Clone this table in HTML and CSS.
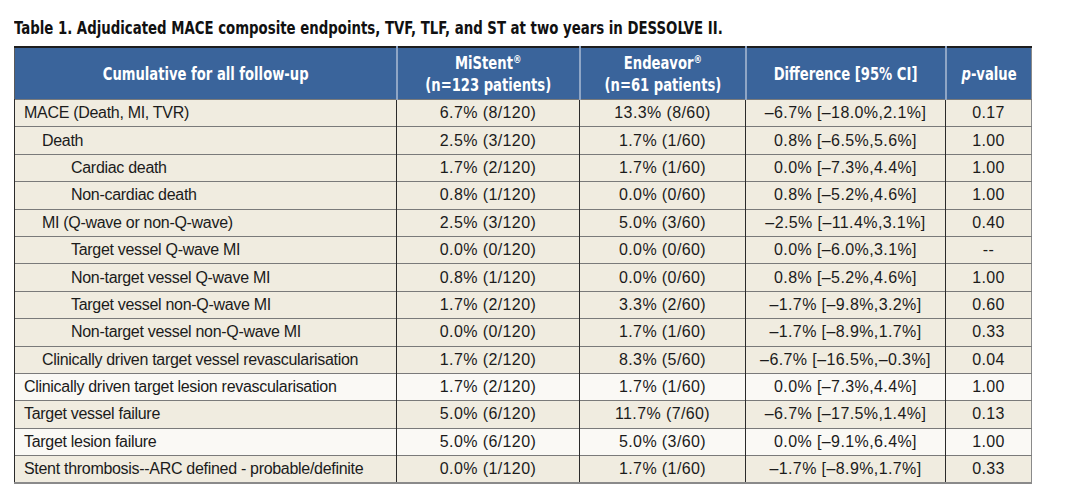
FILE: index.html
```html
<!DOCTYPE html>
<html lang="en">
<head>
<meta charset="utf-8">
<title>Table 1</title>
<link rel="stylesheet" href="styles.css">
</head>
<body>
<div class="page">
  <h1 class="caption"><span class="narrow left">Table 1. Adjudicated MACE composite endpoints, TVF, TLF, and ST at two years in DESSOLVE II.</span></h1>
  <table class="data">
    <colgroup>
      <col class="c1"><col class="c2"><col class="c3"><col class="c4"><col class="c5">
    </colgroup>
    <thead>
      <tr>
        <th><span class="narrow">Cumulative for all follow-up</span></th>
        <th><span class="narrow">MiStent<sup>®</sup><br>(n=123 patients)</span></th>
        <th><span class="narrow">Endeavor<sup>®</sup><br>(n=61 patients)</span></th>
        <th><span class="narrow">Difference [95% CI]</span></th>
        <th><span class="narrow"><i>p</i>-value</span></th>
      </tr>
    </thead>
    <tbody>
      <tr><td class="l0">MACE (Death, MI, TVR)</td><td>6.7% (8/120)</td><td>13.3% (8/60)</td><td>–6.7% [–18.0%,2.1%]</td><td>0.17</td></tr>
      <tr><td class="l1">Death</td><td>2.5% (3/120)</td><td>1.7% (1/60)</td><td>0.8% [–6.5%,5.6%]</td><td>1.00</td></tr>
      <tr><td class="l2">Cardiac death</td><td>1.7% (2/120)</td><td>1.7% (1/60)</td><td>0.0% [–7.3%,4.4%]</td><td>1.00</td></tr>
      <tr><td class="l2">Non-cardiac death</td><td>0.8% (1/120)</td><td>0.0% (0/60)</td><td>0.8% [–5.2%,4.6%]</td><td>1.00</td></tr>
      <tr><td class="l1">MI (Q-wave or non-Q-wave)</td><td>2.5% (3/120)</td><td>5.0% (3/60)</td><td>–2.5% [–11.4%,3.1%]</td><td>0.40</td></tr>
      <tr><td class="l2">Target vessel Q-wave MI</td><td>0.0% (0/120)</td><td>0.0% (0/60)</td><td>0.0% [–6.0%,3.1%]</td><td>--</td></tr>
      <tr><td class="l2">Non-target vessel Q-wave MI</td><td>0.8% (1/120)</td><td>0.0% (0/60)</td><td>0.8% [–5.2%,4.6%]</td><td>1.00</td></tr>
      <tr><td class="l2">Target vessel non-Q-wave MI</td><td>1.7% (2/120)</td><td>3.3% (2/60)</td><td>–1.7% [–9.8%,3.2%]</td><td>0.60</td></tr>
      <tr><td class="l2">Non-target vessel non-Q-wave MI</td><td>0.0% (0/120)</td><td>1.7% (1/60)</td><td>–1.7% [–8.9%,1.7%]</td><td>0.33</td></tr>
      <tr><td class="l1">Clinically driven target vessel revascularisation</td><td>1.7% (2/120)</td><td>8.3% (5/60)</td><td>–6.7% [–16.5%,–0.3%]</td><td>0.04</td></tr>
      <tr class="light"><td class="l0">Clinically driven target lesion revascularisation</td><td>1.7% (2/120)</td><td>1.7% (1/60)</td><td>0.0% [–7.3%,4.4%]</td><td>1.00</td></tr>
      <tr><td class="l0">Target vessel failure</td><td>5.0% (6/120)</td><td>11.7% (7/60)</td><td>–6.7% [–17.5%,1.4%]</td><td>0.13</td></tr>
      <tr class="light"><td class="l0">Target lesion failure</td><td>5.0% (6/120)</td><td>5.0% (3/60)</td><td>0.0% [–9.1%,6.4%]</td><td>1.00</td></tr>
      <tr><td class="l0">Stent thrombosis--ARC defined - probable/definite</td><td>0.0% (1/120)</td><td>1.7% (1/60)</td><td>–1.7% [–8.9%,1.7%]</td><td>0.33</td></tr>
    </tbody>
  </table>
</div>
</body>
</html>
```
FILE: styles.css
```css
html, body {
  margin: 0;
  padding: 0;
  background: #ffffff;
}

.page {
  padding: 18px 0 0 14px;
  width: 1017px;
}

.narrow {
  display: inline-block;
  transform: scaleX(0.86);
  transform-origin: center;
}

.narrow.left {
  transform: scaleX(0.87);
  transform-origin: left;
  white-space: nowrap;
}

.caption {
  margin: 0 0 8px 0;
  font-family: "DejaVu Sans Condensed", "DejaVu Sans", sans-serif;
  font-stretch: condensed;
  font-weight: bold;
  font-size: 17px;
  line-height: 20px;
  color: #111111;
}

.data {
  width: 1017px;
  border-collapse: collapse;
  table-layout: fixed;
  font-family: "Liberation Sans", Arial, sans-serif;
  font-size: 16px;
  letter-spacing: 0.4px;
  color: #1b1b1b;
  border-top: 2px solid #1e1e1e;
  border-left: 1px solid #5a5a5a;
  border-right: 1px solid #8a8a8a;
  border-bottom: 2px solid #8a8a8a;
}

.c1 { width: 382px; }
.c2 { width: 183px; }
.c3 { width: 166px; }
.c4 { width: 200px; }
.c5 { width: 86px; }

.data th {
  background: #3a649b;
  color: #ffffff;
  font-family: "DejaVu Sans Condensed", "DejaVu Sans", sans-serif;
  font-stretch: condensed;
  font-weight: bold;
  font-size: 17px;
  letter-spacing: 0;
  line-height: 22px;
  height: 51px;
  padding: 0;
  text-align: center;
  vertical-align: middle;
  border-left: 2px solid #8fa6c6;
}

.data th:first-child {
  border-left: none;
}

.data th sup {
  font-size: 11px;
  line-height: 0;
  vertical-align: 6px;
}

.data td {
  background: #f0ece0;
  height: 26.4px;
  padding: 0;
  text-align: center;
  vertical-align: middle;
  line-height: 18px;
  border-top: 1px solid #7a7a7a;
  border-left: 1px solid #2b2b2b;
}

.data tr.light td {
  background: #faf9f5;
}

.data td.l0,
.data td.l1,
.data td.l2 {
  text-align: left;
  letter-spacing: -0.3px;
}

.data td.l0 { padding-left: 9px; }
.data td.l1 { padding-left: 27px; }
.data td.l2 { padding-left: 56px; }
```
